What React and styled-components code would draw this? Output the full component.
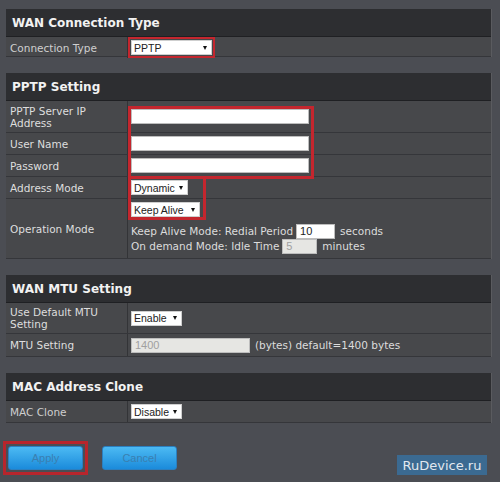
import React from 'react';
import styled, { createGlobalStyle } from 'styled-components';

const Global = createGlobalStyle`
  html, body {
    margin: 0;
    padding: 0;
    background: #4b4d53;
  }
  * { box-sizing: border-box; }
`;

const Page = styled.div`
  position: relative;
  width: 500px;
  height: 482px;
  overflow: hidden;
  padding: 9px 8px 0 6px;
  background: #4b4d53;
  font-family: "DejaVu Sans", Verdana, sans-serif;
  display: flex;
  flex-direction: column;
  gap: 16px;
`;

const Section = styled.div`
  position: relative;
  width: 486px;
  background: #47484b;
  border-right: 1px solid #5a5b5f;
`;

const Header = styled.div`
  height: 28px;
  padding: 0 6px;
  display: flex;
  align-items: center;
  background: #2d2e31;
  border-bottom: 1px solid #1f2023;
  color: #f2f2f2;
  font-size: 12px;
  font-weight: bold;
`;

const Row = styled.div`
  display: grid;
  grid-template-columns: 122px 1fr;
  height: ${({ h }) => h}px;
  border-bottom: 1px solid #35363a;
`;

const Label = styled.div`
  display: flex;
  align-items: center;
  padding: 0 4px;
  border-right: 1px solid #333437;
  color: ${({ light }) => (light ? '#cfcfcf' : '#dedede')};
  font-size: 10.5px;
  line-height: 12px;
`;

const Value = styled.div`
  display: flex;
  flex-direction: ${({ column }) => (column ? 'column' : 'row')};
  align-items: ${({ column }) => (column ? 'flex-start' : 'center')};
  padding: ${({ column }) => (column ? '3px 0 0 3px' : '0 3px')};
  color: #dcdcdc;
  font-size: 10.5px;
`;

const Select = styled.div`
  width: ${({ w }) => w}px;
  height: 15px;
  background: #fff;
  border: 1px solid #cfcfcf;
  display: flex;
  align-items: center;
  justify-content: space-between;
  padding: 0 4px 0 2px;
  color: #222;
  font-family: "Liberation Sans", Arial, sans-serif;
  font-size: 10.5px;
  white-space: nowrap;
  &::after {
    content: '';
    flex-shrink: 0;
    margin-left: 3px;
    border-left: 2.5px solid transparent;
    border-right: 2.5px solid transparent;
    border-top: 4px solid #111;
  }
`;

const Marked = styled.div`
  border: 2px solid #c4262e;
  padding: 1px;
  margin-left: -3px;
`;

const TextInput = styled.div`
  width: ${({ w }) => w}px;
  height: 15px;
  background: ${({ disabled }) => (disabled ? '#e6e6e3' : '#fff')};
  border: 1px solid #bdbdbd;
  padding: 0 3px;
  display: flex;
  align-items: center;
  color: ${({ disabled }) => (disabled ? '#a0a0a0' : '#222')};
  font-family: "Liberation Sans", Arial, sans-serif;
  font-size: 11px;
`;

const Line = styled.div`
  display: flex;
  align-items: center;
  gap: 3px;
  height: 14px;
  margin-top: ${({ top }) => top || 0}px;
  white-space: nowrap;
`;

const Note = styled.span`
  margin-left: ${({ gap }) => gap || 0}px;
`;

const Highlight = styled.div`
  position: absolute;
  left: ${({ x }) => x}px;
  top: ${({ y }) => y}px;
  width: ${({ w }) => w}px;
  height: ${({ h }) => h}px;
  border: 3px solid #c4262e;
  pointer-events: none;
`;

const Buttons = styled.div`
  display: flex;
  align-items: center;
  gap: 14px;
  margin: 2px 0 0 -3px;
`;

const ApplyFrame = styled.div`
  border: 3px solid #b8252c;
  padding: 2px;
`;

const Button = styled.button`
  width: 75px;
  height: 24px;
  border: 1px solid #2b7fc0;
  border-radius: 3px;
  background: linear-gradient(#4cbaf3, #1b8bdb);
  color: #3a7fb0;
  font-family: "Liberation Sans", Arial, sans-serif;
  font-size: 11px;
  padding: 0;
`;

const Watermark = styled.div`
  position: absolute;
  right: 13px;
  bottom: 7px;
  width: 90px;
  height: 20px;
  background: #3b6a91;
  color: #e2e8ef;
  font-family: "DejaVu Sans", sans-serif;
  font-size: 13px;
  display: flex;
  align-items: center;
  justify-content: center;
`;

export default function App() {
  return (
    <Page>
      <Global />
      <Section>
        <Header>WAN Connection Type</Header>
        <Row h={20}>
          <Label light>Connection Type</Label>
          <Value>
            <Marked>
              <Select w={81}>PPTP</Select>
            </Marked>
          </Value>
        </Row>
      </Section>

      <Section>
        <Header>PPTP Setting</Header>
        <Row h={32}>
          <Label>PPTP Server IP Address</Label>
          <Value><TextInput w={178} /></Value>
        </Row>
        <Row h={22}>
          <Label>User Name</Label>
          <Value><TextInput w={178} /></Value>
        </Row>
        <Row h={22}>
          <Label>Password</Label>
          <Value><TextInput w={178} /></Value>
        </Row>
        <Row h={22}>
          <Label>Address Mode</Label>
          <Value><Select w={57}>Dynamic</Select></Value>
        </Row>
        <Row h={60}>
          <Label>Operation Mode</Label>
          <Value column>
            <Select w={69}>Keep Alive</Select>
            <Line top={7}>
              <span>Keep Alive Mode: Redial Period</span>
              <TextInput w={39}>10</TextInput>
              <Note gap={2}>seconds</Note>
            </Line>
            <Line top={1}>
              <span>On demand Mode: Idle Time</span>
              <TextInput w={35} disabled>5</TextInput>
              <Note gap={2}>minutes</Note>
            </Line>
          </Value>
        </Row>
        <Highlight x={122} y={33} w={186} h={73} />
        <Highlight x={122} y={103} w={78} h={44} />
      </Section>

      <Section>
        <Header>WAN MTU Setting</Header>
        <Row h={31}>
          <Label>Use Default MTU Setting</Label>
          <Value><Select w={51}>Enable</Select></Value>
        </Row>
        <Row h={23}>
          <Label>MTU Setting</Label>
          <Value>
            <TextInput w={119} disabled>1400</TextInput>
            <Note gap={5}>(bytes) default=1400 bytes</Note>
          </Value>
        </Row>
      </Section>

      <Section>
        <Header>MAC Address Clone</Header>
        <Row h={22}>
          <Label light>MAC Clone</Label>
          <Value><Select w={51}>Disable</Select></Value>
        </Row>
      </Section>

      <Buttons>
        <ApplyFrame>
          <Button>Apply</Button>
        </ApplyFrame>
        <Button>Cancel</Button>
      </Buttons>

      <Watermark>RuDevice.ru</Watermark>
    </Page>
  );
}
